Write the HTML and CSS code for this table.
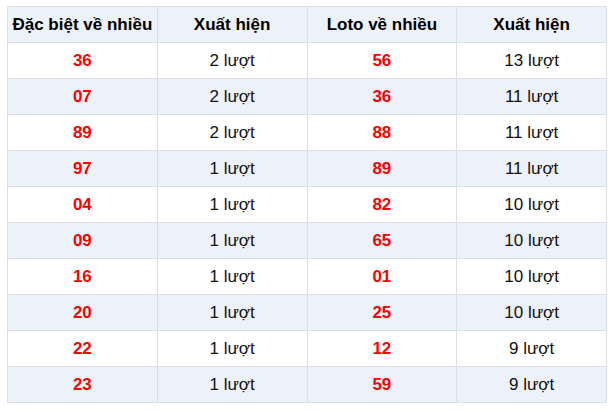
FILE: index.html
```html
<!DOCTYPE html>
<html>
<head>
<meta charset="utf-8">
<link rel="stylesheet" href="styles.css">
</head>
<body>
<table class="stats">
  <thead>
    <tr><th>Đặc biệt về nhiều</th><th>Xuất hiện</th><th>Loto về nhiều</th><th>Xuất hiện</th></tr>
  </thead>
  <tbody>
    <tr><td class="num">36</td><td>2 lượt</td><td class="num">56</td><td>13 lượt</td></tr>
    <tr><td class="num">07</td><td>2 lượt</td><td class="num">36</td><td>11 lượt</td></tr>
    <tr><td class="num">89</td><td>2 lượt</td><td class="num">88</td><td>11 lượt</td></tr>
    <tr><td class="num">97</td><td>1 lượt</td><td class="num">89</td><td>11 lượt</td></tr>
    <tr><td class="num">04</td><td>1 lượt</td><td class="num">82</td><td>10 lượt</td></tr>
    <tr><td class="num">09</td><td>1 lượt</td><td class="num">65</td><td>10 lượt</td></tr>
    <tr><td class="num">16</td><td>1 lượt</td><td class="num">01</td><td>10 lượt</td></tr>
    <tr><td class="num">20</td><td>1 lượt</td><td class="num">25</td><td>10 lượt</td></tr>
    <tr><td class="num">22</td><td>1 lượt</td><td class="num">12</td><td>9 lượt</td></tr>
    <tr><td class="num">23</td><td>1 lượt</td><td class="num">59</td><td>9 lượt</td></tr>
  </tbody>
</table>
</body>
</html>
```
FILE: styles.css
```css
html, body {
  margin: 0;
  padding: 0;
  background: #ffffff;
}
body {
  padding: 6px 7px;
  font-family: "Liberation Sans", Arial, sans-serif;
}
.stats {
  border-collapse: collapse;
  width: 600px;
  table-layout: fixed;
  font-size: 17px;
  color: #111111;
}
.stats th, .stats td {
  border: 1px solid #dcdfe6;
  height: 35px;
  padding: 0;
  text-align: center;
  vertical-align: middle;
}
.stats th {
  background: #edf1fa;
  font-weight: bold;
  color: #000000;
}
.stats tbody tr:nth-child(even) td {
  background: #edf1fa;
}
.stats td.num {
  color: #ff0000;
  font-weight: bold;
}
```
